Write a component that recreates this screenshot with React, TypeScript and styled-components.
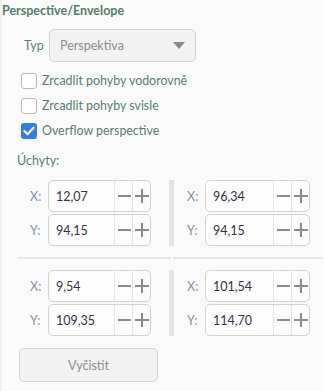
import React from "react";
import styled, { createGlobalStyle } from "styled-components";

const GlobalStyle = createGlobalStyle`
  html, body {
    margin: 0;
    padding: 0;
    background: #fafafa;
  }
  body {
    font-family: "Lato", "Open Sans", sans-serif;
  }
`;

const Panel = styled.div`
  width: 322px;
  height: 391px;
  border-left: 2px solid #efefef;
  background: #fafafa;
  box-sizing: border-box;
`;

const Title = styled.div`
  padding-top: 2px;
  font-size: 12.5px;
  font-weight: 700;
  color: #587a6b;
  height: 18px;
  line-height: 18px;
`;

const TypRow = styled.div`
  display: flex;
  align-items: center;
  margin-top: 9px;
  padding-left: 22px;
`;

const FieldLabel = styled.span`
  font-size: 12.5px;
  color: #5a7d6e;
  width: 25px;
`;

const Select = styled.div`
  width: 147px;
  height: 33px;
  box-sizing: border-box;
  border: 1px solid #d4d1cc;
  border-radius: 5px;
  background: #f2f2f2;
  display: flex;
  align-items: center;
  justify-content: space-between;
  padding: 0 10px 0 10px;
  font-size: 12.5px;
  color: #8b8b8b;
`;

const Caret = styled.span`
  width: 0;
  height: 0;
  border-left: 6.5px solid transparent;
  border-right: 6.5px solid transparent;
  border-top: 7px solid #8a8a8a;
`;

const Checks = styled.div`
  margin-top: 11px;
  padding-left: 19px;
  display: flex;
  flex-direction: column;
  gap: 10px;
`;

const CheckRow = styled.label`
  display: flex;
  align-items: center;
  gap: 5px;
  font-size: 12.4px;
  color: #5a7d6e;
  height: 15px;
`;

const Box = styled.span<{ $checked?: boolean }>`
  width: 16px;
  height: 16px;
  box-sizing: border-box;
  border-radius: 3px;
  border: ${(p) => (p.$checked ? "none" : "1.5px solid #bcb9b4")};
  background: ${(p) => (p.$checked ? "#2f7fe4" : "#ffffff")};
  display: flex;
  align-items: center;
  justify-content: center;
`;

const SectionLabel = styled.div`
  margin-top: 15px;
  padding-left: 15px;
  font-size: 12.5px;
  color: #5a7d6e;
  line-height: 16px;
`;

const Points = styled.div`
  margin-top: 11px;
`;

const PointRow = styled.div`
  display: grid;
  grid-template-columns: 152px 1fr;
  margin-left: 15px;
`;

const Cell = styled.div<{ $bar?: boolean }>`
  border-left: ${(p) => (p.$bar ? "5px solid #e3e3e3" : "none")};
  padding-left: 13px;
  display: flex;
  flex-direction: column;
  gap: 2px;
`;

const Separator = styled.div`
  display: grid;
  grid-template-columns: 154px 1fr;
  column-gap: 2px;
  margin: 11px 0 11px 15px;
  div {
    height: 2px;
    background: #e6e4e1;
  }
`;

const InputRow = styled.div`
  display: flex;
  align-items: center;
`;

const AxisLabel = styled.span`
  width: 18px;
  font-size: 12.5px;
  color: #8394a3;
`;

const NumBox = styled.div<{ $w: number }>`
  width: ${(p) => p.$w}px;
  height: 32px;
  box-sizing: border-box;
  border: 1px solid #d6d3ce;
  border-radius: 5px;
  background: #fdfdfd;
  display: flex;
  align-items: stretch;
`;

const Value = styled.span`
  flex: 1;
  display: flex;
  align-items: center;
  padding-left: 7px;
  font-size: 12.5px;
  color: #33333f;
`;

const Step = styled.span`
  width: 17px;
  border-left: 1px solid #e9e7e4;
  display: flex;
  align-items: center;
  justify-content: center;
`;

const ClearButton = styled.div`
  margin: 12px 0 0 17px;
  width: 139px;
  height: 34px;
  box-sizing: border-box;
  border: 1px solid #d6d3ce;
  border-radius: 5px;
  background: #f2f2f2;
  display: flex;
  align-items: center;
  justify-content: center;
  font-size: 12.5px;
  color: #8d8d8d;
`;

const Minus = () => (
  <svg width="14" height="14" viewBox="0 0 14 14">
    <path d="M1 7h13" stroke="#8a8a8a" strokeWidth="2" />
  </svg>
);

const Plus = () => (
  <svg width="14" height="14" viewBox="0 0 14 14">
    <path d="M0 7h14M7 0v14" stroke="#8a8a8a" strokeWidth="2" />
  </svg>
);

const Check = () => (
  <svg width="12" height="10" viewBox="0 0 12 10">
    <path d="M1.5 5.2l3 3 6-6.5" fill="none" stroke="#fff" strokeWidth="2.2" strokeLinecap="round" strokeLinejoin="round" />
  </svg>
);

const NumField = ({ axis, value, w }: { axis: string; value: string; w: number }) => (
  <InputRow>
    <AxisLabel>{axis}:</AxisLabel>
    <NumBox $w={w}>
      <Value>{value}</Value>
      <Step>
        <Minus />
      </Step>
      <Step>
        <Plus />
      </Step>
    </NumBox>
  </InputRow>
);

const points = [
  [
    { x: "12,07", y: "94,15" },
    { x: "96,34", y: "94,15" },
  ],
  [
    { x: "9,54", y: "109,35" },
    { x: "101,54", y: "114,70" },
  ],
];

export default function App() {
  return (
    <>
      <GlobalStyle />
      <Panel>
        <Title>Perspective/Envelope</Title>
        <TypRow>
          <FieldLabel>Typ</FieldLabel>
          <Select>
            Perspektiva
            <Caret />
          </Select>
        </TypRow>
        <Checks>
          <CheckRow>
            <Box />
            Zrcadlit pohyby vodorovně
          </CheckRow>
          <CheckRow>
            <Box />
            Zrcadlit pohyby svisle
          </CheckRow>
          <CheckRow>
            <Box $checked>
              <Check />
            </Box>
            Overflow perspective
          </CheckRow>
        </Checks>
        <SectionLabel>Úchyty:</SectionLabel>
        <Points>
          {points.map((row, i) => (
            <React.Fragment key={i}>
              {i > 0 && (
                <Separator>
                  <div />
                  <div />
                </Separator>
              )}
              <PointRow>
                {row.map((p, j) => (
                  <Cell key={j} $bar={j === 1}>
                    <NumField axis="X" value={p.x} w={j === 0 ? 103 : 105} />
                    <NumField axis="Y" value={p.y} w={j === 0 ? 103 : 105} />
                  </Cell>
                ))}
              </PointRow>
            </React.Fragment>
          ))}
        </Points>
        <ClearButton>Vyčistit</ClearButton>
      </Panel>
    </>
  );
}
